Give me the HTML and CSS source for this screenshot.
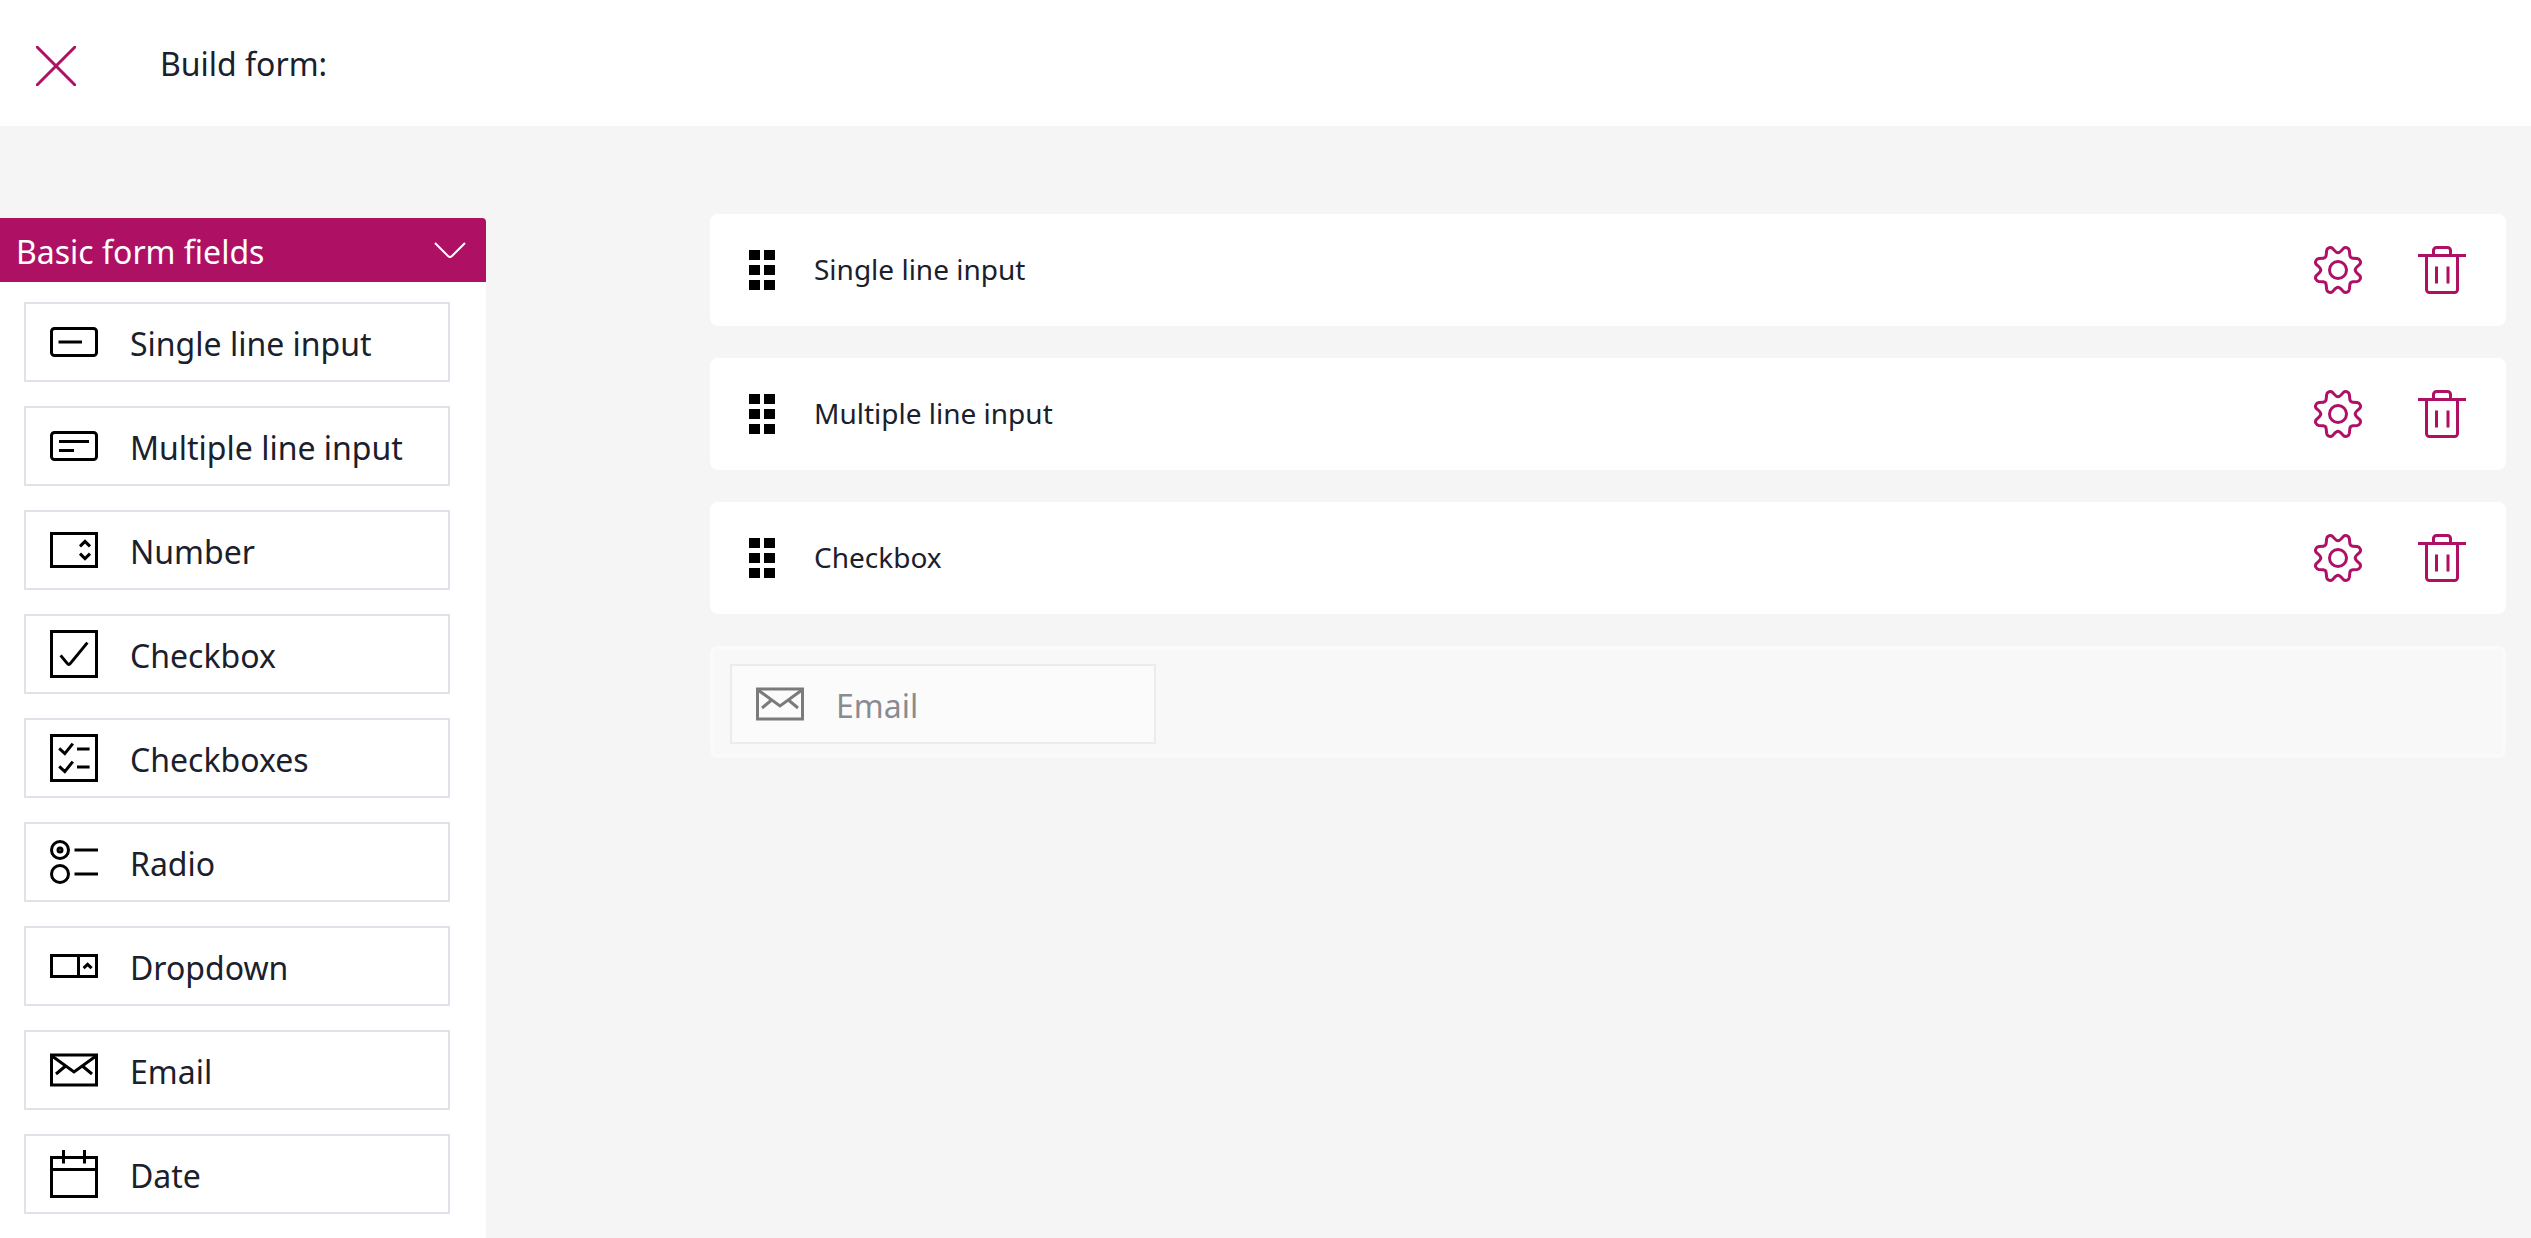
FILE: index.html
```html
<!DOCTYPE html>
<html lang="en">
<head>
  <meta charset="UTF-8">
  <title>Build form</title>
  <link rel="stylesheet" href="styles.css">
</head>
<body>
  <!-- shared icons -->
  <svg class="sprite" aria-hidden="true">
    <symbol id="icon-email" viewBox="0 0 24 24">
      <rect x="0.75" y="4.5" width="22.5" height="15"/>
      <path d="M1 5l11 8 11-8M7.8 10L3 14M16.2 10l4.8 4"/>
    </symbol>
    <symbol id="icon-drag" viewBox="0 0 28 40">
      <path d="M1 0h11v10H1zM16 0h11v10H16zM1 15h11v10H1zM16 15h11v10H16zM1 30h11v10H1zM16 30h11v10H16z"/>
    </symbol>
    <symbol id="icon-settings" viewBox="0 0 24 24">
      <circle cx="12" cy="12" r="4.25"/>
      <path d="M12 3.4C10.8 3.4 10 1.9 9.2 1.1C8 .3 6.5 1 6.3 2.4L6.1 4.6C6 5.5 5.5 6 4.6 6.1L2.4 6.3C1 6.5 .3 8 1.1 9.2C1.9 10 3.4 10.8 3.4 12C3.4 13.2 1.9 14 1.1 14.8C.3 16 1 17.5 2.4 17.7L4.6 17.9C5.5 18 6 18.5 6.1 19.4L6.3 21.6C6.5 23 8 23.7 9.2 22.9C10 22.1 10.8 20.6 12 20.6C13.2 20.6 14 22.1 14.8 22.9C16 23.7 17.5 23 17.7 21.6L17.9 19.4C18 18.5 18.5 18 19.4 17.9L21.6 17.7C23 17.5 23.7 16 22.9 14.8C22.1 14 20.6 13.2 20.6 12C20.6 10.8 22.1 10 22.9 9.2C23.7 8 23 6.5 21.6 6.3L19.4 6.1C18.5 6 18 5.5 17.9 4.6L17.7 2.4C17.5 1 16 .3 14.8 1.1C14 1.9 13.2 3.4 12 3.4z"/>
    </symbol>
    <symbol id="icon-trash" viewBox="0 0 24 24">
      <path d="M0 4.75h24M7.75 4.5V2.25a1.5 1.5 0 0 1 1.5-1.5h5.5a1.5 1.5 0 0 1 1.5 1.5V4.5M4.25 4.75v17a1.5 1.5 0 0 0 1.5 1.5h12.5a1.5 1.5 0 0 0 1.5-1.5v-17M9.25 10.25v8.5M15 10.25v8.5"/>
    </symbol>
  </svg>

  <header class="topbar">
    <button class="close" type="button" aria-label="Close">
      <svg viewBox="0 0 40 40"><path d="M0 0l40 40M40 0L0 40"/></svg>
    </button>
    <h1>Build form:</h1>
  </header>

  <div class="builder">
    <aside class="sidebar">
      <button class="group-title" type="button" aria-expanded="true">
        <span>Basic form fields</span>
        <svg viewBox="0 0 32 16"><path d="M1 1l13 13q2 2 4 0L31 1"/></svg>
      </button>
      <ul class="field-types">
        <li class="field-type" draggable="true">
          <svg class="icon" viewBox="0 0 24 24"><rect x="0.75" y="5.25" width="22.5" height="13.5" rx="1.5"/><path d="M4.25 12H16"/></svg>
          <span>Single line input</span>
        </li>
        <li class="field-type" draggable="true">
          <svg class="icon" viewBox="0 0 24 24"><rect x="0.75" y="5.25" width="22.5" height="13.5" rx="1.5"/><path d="M4.5 9.75h15M4.5 14.25H12"/></svg>
          <span>Multiple line input</span>
        </li>
        <li class="field-type" draggable="true">
          <svg class="icon" viewBox="0 0 24 24"><rect x="0.75" y="3.75" width="22.5" height="16.5"/><path d="M15 10.2l2.5-2.5 2.5 2.5M15 13.8l2.5 2.5 2.5-2.5"/></svg>
          <span>Number</span>
        </li>
        <li class="field-type" draggable="true">
          <svg class="icon" viewBox="0 0 24 24"><rect x="0.75" y="0.75" width="22.5" height="22.5"/><path d="M5.3 12.7l3.3 4q.8 1 1.6 0l8.5-10.4"/></svg>
          <span>Checkbox</span>
        </li>
        <li class="field-type" draggable="true">
          <svg class="icon" viewBox="0 0 24 24"><rect x="0.75" y="0.75" width="22.5" height="22.5"/><path d="M4.6 7.2l2.8 2.6 4-5M13.5 7.5h6.3M4.6 16.2l2.8 2.6 4-5M13.5 16.5h6.3"/></svg>
          <span>Checkboxes</span>
        </li>
        <li class="field-type" draggable="true">
          <svg class="icon" viewBox="0 0 24 24"><circle cx="5" cy="6" r="4.25"/><circle cx="5" cy="6" r="1"/><circle cx="5" cy="18" r="4.25"/><path d="M12.25 6H24M12.25 18H24"/></svg>
          <span>Radio</span>
        </li>
        <li class="field-type" draggable="true">
          <svg class="icon" viewBox="0 0 24 24"><rect x="0.75" y="6.75" width="22.5" height="10.5"/><path d="M14.25 6.75v10.5M16.8 13.1l2-1.9 2 1.9"/></svg>
          <span>Dropdown</span>
        </li>
        <li class="field-type" draggable="true">
          <svg class="icon"><use href="#icon-email"/></svg>
          <span>Email</span>
        </li>
        <li class="field-type" draggable="true">
          <svg class="icon" viewBox="0 0 24 24"><rect x="0.75" y="3.75" width="22.5" height="19.5"/><path d="M0.75 9.75h22.5M6.75 0v6.75M17.25 0v6.75"/></svg>
          <span>Date</span>
        </li>
      </ul>
    </aside>

    <main class="canvas">
      <section class="form-field">
        <svg class="drag"><use href="#icon-drag"/></svg>
        <span class="name">Single line input</span>
        <button class="action" type="button" aria-label="Settings"><svg class="icon"><use href="#icon-settings"/></svg></button>
        <button class="action" type="button" aria-label="Delete"><svg class="icon"><use href="#icon-trash"/></svg></button>
      </section>
      <section class="form-field">
        <svg class="drag"><use href="#icon-drag"/></svg>
        <span class="name">Multiple line input</span>
        <button class="action" type="button" aria-label="Settings"><svg class="icon"><use href="#icon-settings"/></svg></button>
        <button class="action" type="button" aria-label="Delete"><svg class="icon"><use href="#icon-trash"/></svg></button>
      </section>
      <section class="form-field">
        <svg class="drag"><use href="#icon-drag"/></svg>
        <span class="name">Checkbox</span>
        <button class="action" type="button" aria-label="Settings"><svg class="icon"><use href="#icon-settings"/></svg></button>
        <button class="action" type="button" aria-label="Delete"><svg class="icon"><use href="#icon-trash"/></svg></button>
      </section>
      <!-- field being dropped -->
      <section class="drop-zone">
        <div class="field-type ghost">
          <svg class="icon"><use href="#icon-email"/></svg>
          <span>Email</span>
        </div>
      </section>
    </main>
  </div>
</body>
</html>
```
FILE: styles.css
```css
* { box-sizing: border-box; }
body { display: flex; flex-direction: column; min-height: 100vh; margin: 0; background: #f5f5f5; color: #1a202c; font: 32px/44px "Noto Sans", sans-serif; }
button { padding: 0; border: 0; background: none; color: inherit; font: inherit; cursor: pointer; }
svg { display: block; flex: none; fill: none; stroke: currentColor; }
.sprite { position: absolute; width: 0; height: 0; }

.topbar { display: flex; align-items: center; height: 126px; padding: 2px 36px 0; background: #fff; }
.topbar h1 { margin: 0 0 0 84px; font-size: 32px; font-weight: 400; }
.close { padding-top: 4px; color: #ae1164; }
.close svg { width: 40px; height: 40px; stroke-width: 3; }

.builder { display: flex; flex: 1; }

.sidebar { width: 486px; margin-top: 92px; background: #fff; border-radius: 0 4px 0 0; }
.group-title { display: flex; align-items: center; justify-content: space-between; width: 100%; height: 64px; padding: 4px 20px 0 16px; border-radius: 0 4px 0 0; background: #ae1164; color: #fff; }
.group-title svg { width: 32px; height: 16px; margin-bottom: 4px; stroke-width: 2; }

.field-types { display: flex; flex-direction: column; gap: 24px; margin: 0; padding: 20px 36px 24px 24px; list-style: none; }
.field-type { display: flex; align-items: center; gap: 32px; width: 426px; height: 80px; padding: 0 24px; border: 2px solid #e1e1ea; background: #fff; cursor: grab; }
.field-type span { padding-top: 4px; }
.icon { width: 48px; height: 48px; stroke-width: 1.5; }
.field-type .icon { color: #000; }

.canvas { display: flex; flex: 1; flex-direction: column; gap: 32px; padding: 88px 25px 32px 224px; }
.form-field { display: flex; align-items: center; height: 112px; padding: 0 40px 0 38px; border-radius: 8px; background: #fff; font-size: 28px; }
.drag { width: 28px; height: 40px; fill: #000; stroke: none; cursor: grab; }
.name { flex: 1; margin-left: 38px; padding-bottom: 2px; }
.action { color: #ae1164; }
.action + .action { margin-left: 56px; }

.drop-zone { height: 112px; padding: 14px 16px; border: 4px solid #fafafa; border-radius: 8px; background: #f8f8f8; }
.ghost { opacity: 0.5; }
```
